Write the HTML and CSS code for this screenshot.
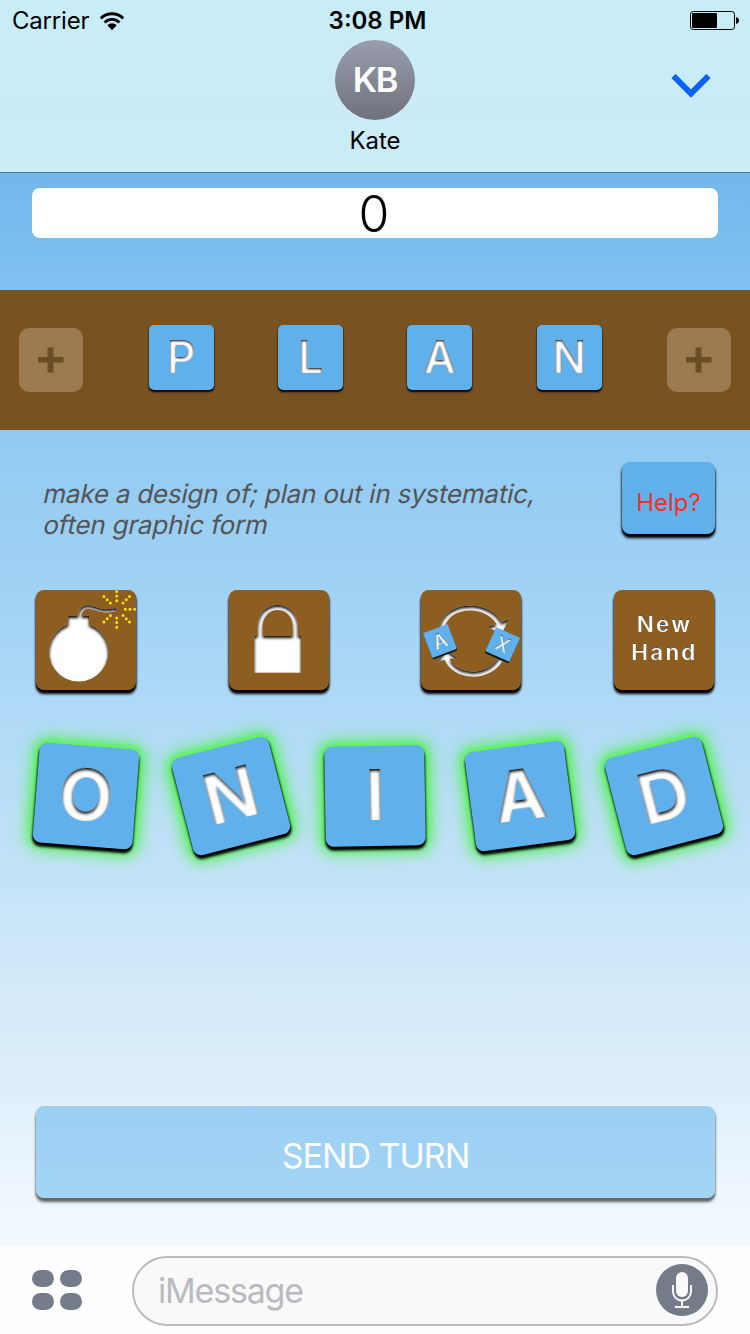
FILE: index.html
```html
<!DOCTYPE html>
<html lang="en">
<head>
<meta charset="utf-8">
<title>Kate</title>
<link rel="stylesheet" href="styles.css">
</head>
<body>
<svg class="defs" width="0" height="0" aria-hidden="true">
  <defs>
    <filter id="carve" x="-10%" y="-10%" width="120%" height="120%" color-interpolation-filters="sRGB">
      <feComponentTransfer in="SourceAlpha"><feFuncA type="table" tableValues="1 0"/></feComponentTransfer>
      <feGaussianBlur stdDeviation="1.5"/>
      <feOffset dy="2" result="edge"/>
      <feComposite in="edge" in2="SourceAlpha" operator="in" result="inner"/>
      <feMerge><feMergeNode in="SourceGraphic"/><feMergeNode in="inner"/></feMerge>
    </filter>
    <filter id="carve-small" x="-10%" y="-10%" width="120%" height="120%" color-interpolation-filters="sRGB">
      <feComponentTransfer in="SourceAlpha"><feFuncA type="table" tableValues="1 0"/></feComponentTransfer>
      <feGaussianBlur stdDeviation="0.9"/>
      <feOffset dy="1.1" result="edge"/>
      <feComposite in="edge" in2="SourceAlpha" operator="in" result="inner"/>
      <feMerge><feMergeNode in="SourceGraphic"/><feMergeNode in="inner"/></feMerge>
    </filter>
    <filter id="carve-tiny" x="-10%" y="-10%" width="120%" height="120%" color-interpolation-filters="sRGB">
      <feComponentTransfer in="SourceAlpha"><feFuncA type="table" tableValues="0.7 0"/></feComponentTransfer>
      <feGaussianBlur stdDeviation="0.7"/>
      <feOffset dy="0.8" result="edge"/>
      <feComposite in="edge" in2="SourceAlpha" operator="in" result="inner"/>
      <feMerge><feMergeNode in="SourceGraphic"/><feMergeNode in="inner"/></feMerge>
    </filter>
  </defs>
</svg>
<div class="screen">
  <header class="header">
    <div class="status">
      <div class="status-left">
        <span class="carrier">Carrier</span>
        <svg class="wifi" width="26" height="19" viewBox="0 0 26 19">
          <path d="M1.8 6.3A16.2 16.2 0 0 1 24.2 6.3" fill="none" stroke="#000" stroke-width="3.1"/>
          <path d="M5.6 10.4A10.6 10.6 0 0 1 20.4 10.4" fill="none" stroke="#000" stroke-width="2.8"/>
          <path d="M8.3 13.2A6.6 6.6 0 0 1 17.7 13.2L13 18.2Z"/>
        </svg>
      </div>
      <span class="time">3:08 PM</span>
      <svg class="battery" width="50" height="20" viewBox="0 0 50 20">
        <rect x=".5" y=".5" width="44" height="18" rx="2.8" fill="none" stroke="#000"/>
        <rect x="2" y="2" width="25" height="15" rx="1"/>
        <path d="M46 6.2Q49 6.5 49 9.5Q49 12.5 46 12.8Z"/>
      </svg>
    </div>
    <div class="contact">
      <span></span>
      <div class="person">
        <div class="avatar">KB</div>
        <span class="name">Kate</span>
      </div>
      <svg class="chevron" width="40" height="26" viewBox="0 0 40 26">
        <path d="M2.500 2L20 19.500L37.500 2" fill="none" stroke="#0b60fe" stroke-width="6"/>
      </svg>
    </div>
  </header>

  <main class="game">
    <div class="score">0</div>
    <div class="board">
      <div class="slot"><svg width="26" height="26" viewBox="0 0 26 26"><path d="M9.500 .5h6v9.500h10v5.500H15.500v10h-6V15.500H0V10H9.500z"/></svg></div>
      <div class="word">
        <div class="tile small"><span>P</span></div>
        <div class="tile small"><span>L</span></div>
        <div class="tile small"><span>A</span></div>
        <div class="tile small"><span>N</span></div>
      </div>
      <div class="slot"><svg width="26" height="26" viewBox="0 0 26 26"><path d="M9.500 .5h6v9.500h10v5.500H15.500v10h-6V15.500H0V10H9.500z"/></svg></div>
    </div>
    <div class="clue">
      <p class="definition"><span class="line first">make a design of; plan out in systematic,</span> <span class="line second">often graphic form</span></p>
      <div class="help">Help?</div>
    </div>
    <div class="tools">
      <div class="tool">
        <svg width="101" height="100" viewBox="0 0 101 100">
          <g filter="url(#carve)">
            <path fill="#fff" d="M32.300 26H53V34.500A29.500 29.500 0 1 1 32.300 34.500Z"/>
            <path d="M43.500 28C44 21 47 17 52 16.800C59 16.500 64 24 80.500 19.500" fill="none" stroke="#fff" stroke-width="3.200"/>
          </g>
          <g class="spark">
            <path d="M80.700 10.700V0M80.700 28V38M89.400 19.300H99.500M87 13L94 6M87 25.600L94 32.600M74.400 13L67.400 6M74.400 25.600L67.400 32.600"/>
          </g>
        </svg>
      </div>
      <div class="tool">
        <svg width="100" height="100" viewBox="0 0 100 100">
          <g filter="url(#carve)">
            <path fill="#fff" d="M25.300 46H72V82.700H25.300Z"/>
            <path d="M31.200 48V37C31.200 11 66.200 11 66.200 37V48" fill="none" stroke="#fff" stroke-width="5"/>
          </g>
        </svg>
      </div>
      <div class="tool">
        <svg width="101" height="100" viewBox="0 0 101 100">
          <g filter="url(#carve)">
            <path d="M21.500 37C26 12 70 12 79 36" fill="none" stroke="#fff" stroke-width="5"/>
            <path d="M25.500 68C33 89 69 90 80.500 68" fill="none" stroke="#fff" stroke-width="5"/>
            <path fill="#fff" d="M66 37Q75 35 87.500 29.500L81 44ZM15.500 73L25 60L37 69Q26 67 15.500 73Z"/>
          </g>
          <g transform="translate(19 51) rotate(-21)">
            <rect class="mini-shade" x="-13.200" y="-11" width="26.400" height="26" rx="2"/>
            <rect class="mini" x="-13.200" y="-13.200" width="26.400" height="26.400" rx="1.500"/>
            <text class="mini-letter" x="0" y="7.200">A</text>
          </g>
          <g transform="translate(81.700 54.500) rotate(24)">
            <rect class="mini-shade" x="-13.200" y="-11" width="26.400" height="26" rx="2"/>
            <rect class="mini" x="-13.200" y="-13.200" width="26.400" height="26.400" rx="1.500"/>
            <text class="mini-letter" x="0" y="7.200">X</text>
          </g>
        </svg>
      </div>
      <div class="tool"><span class="new-hand">New<br>Hand</span></div>
    </div>
    <div class="hand">
      <div class="tile tilt-o"><span>O</span></div>
      <div class="tile tilt-n"><span>N</span></div>
      <div class="tile tilt-i"><span>I</span></div>
      <div class="tile tilt-a"><span>A</span></div>
      <div class="tile tilt-d"><span>D</span></div>
    </div>
    <div class="send">SEND TURN</div>
  </main>

  <footer class="composer">
    <div class="apps"><i></i><i></i><i></i><i></i></div>
    <div class="message">
      <span class="placeholder">iMessage</span>
      <svg class="mic" width="52" height="52" viewBox="0 0 52 52">
        <circle cx="26" cy="26" r="26" fill="#747b89"/>
        <rect x="20" y="8" width="12" height="25" rx="6" fill="#f9f9f9"/>
        <path d="M17 21V27.500A9 9 0 0 0 35 27.500V21M26 36.500V43M19 43H33" fill="none" stroke="#f9f9f9" stroke-width="2"/>
      </svg>
    </div>
  </footer>
</div>
</body>
</html>
```
FILE: styles.css
```css
* { box-sizing: border-box; }

body {
  margin: 0;
  font-family: Inter, "Liberation Sans", sans-serif;
  color: #000;
}

.defs { display: block; width: 0; height: 0; }

.screen {
  width: 750px;
  height: 1334px;
  display: flex;
  flex-direction: column;
  overflow: hidden;
}

.header {
  height: 173px;
  border-bottom: 1px solid #44799b;
  background: linear-gradient(#c8edf6, #cbebf6 80%, #cbeef6);
}

.status {
  height: 40px;
  padding: 1px 10px 0 12px;
  display: grid;
  grid-template-columns: 1fr auto 1fr;
  align-items: center;
  font-size: 24px;
}

.status-left { display: flex; align-items: center; gap: 10px; }
.carrier { letter-spacing: -0.2px; line-height: 40px; }
.time { padding-left: 3px; font-weight: 600; line-height: 40px; }
.battery { justify-self: end; }

.contact {
  height: 120px;
  padding: 0 39px;
  display: grid;
  grid-template-columns: 1fr 80px 1fr;
}

.person { display: flex; flex-direction: column; align-items: center; }

.avatar {
  width: 80px;
  height: 80px;
  border-radius: 50%;
  background: linear-gradient(#999eae, #6f727c);
  color: #fff;
  font-size: 34.500px;
  font-weight: 600;
  letter-spacing: -1.2px;
  line-height: 80px;
  text-align: center;
}

.name { font-size: 24px; line-height: 42px; }
.chevron { justify-self: end; margin-top: 34px; }

.game {
  height: 1073px;
  background: linear-gradient(#71b8ee, #90caf3 24%, #9fd1f4 37%, #b3dbf7 53%, #c5e3f8 66%, #deeffa 85%, #eef6fe 95%, #f2fafd);
}

.score {
  margin: 15px 32px 52px;
  height: 50px;
  padding-right: 2px;
  border-radius: 8px;
  background: #fff;
  font-size: 50px;
  font-weight: 300;
  line-height: 53px;
  text-align: center;
}

.board {
  height: 140px;
  padding: 0 19px;
  display: flex;
  align-items: center;
  justify-content: space-between;
  background: #785221;
}

.slot {
  width: 64px;
  height: 64px;
  border-radius: 10px;
  background: #9a7a4e;
  display: grid;
  place-items: center;
  fill: #6b4c24;
}

.slot svg { margin-bottom: 1px; }

.word {
  display: flex;
  gap: 64.300px;
  margin: 0 0 5px .6px;
}

.tile {
  width: 100px;
  height: 100px;
  border-radius: 8px;
  background: #60b0ec;
  box-shadow: 0 4px 3px #000, 0 2px 2px #000, 0 1px 16px 6px #57f257, 0 0 6px 2px #57f257;
  display: flex;
  justify-content: center;
  color: #fff;
  font-size: 70px;
  font-weight: 650;
  line-height: 97px;
}

.tile span { display: block; padding: 0 8px; filter: url(#carve); }

.tile.small {
  width: 65px;
  height: 65px;
  border-radius: 5px;
  box-shadow: 0 2px 2px #000, 0 1px 1px #000;
  font-size: 45px;
  font-weight: 600;
  line-height: 64px;
}

.tile.small span { filter: url(#carve-small); }

.clue {
  height: 160px;
  padding: 32px 35px 0 44px;
  display: flex;
  justify-content: space-between;
  align-items: flex-start;
}

.definition {
  margin: 16px 0 0;
  color: #555;
  font-size: 26px;
  line-height: 31px;
  white-space: nowrap;
}

.line { display: block; transform: skewX(-12deg); }
.first { letter-spacing: -0.22px; }
.second { letter-spacing: -0.2px; }

.help {
  width: 93px;
  height: 72px;
  padding-top: 5px;
  border-radius: 8px;
  background: #60b0ec;
  box-shadow: 0 4px 3px #000, 0 2px 2px #000;
  color: #f5311f;
  font-size: 24px;
  line-height: 72px;
  text-align: center;
}

.tools {
  height: 156px;
  padding: 0 36px;
  display: flex;
  justify-content: space-between;
}

.tool {
  width: 100px;
  height: 100px;
  border-radius: 8px;
  background: #8e5e20;
  box-shadow: 0 4px 3px #000, 0 2px 2px #000;
}

.tool svg { display: block; }

.spark path {
  fill: none;
  stroke: #fae013;
  stroke-width: 3;
  stroke-linecap: round;
  stroke-dasharray: 0 4.600;
}

.mini { fill: #60b0ec; }
.mini-shade { fill: #1b1712; }
.mini-letter {
  fill: #fff;
  font-size: 20px;
  font-weight: 500;
  text-anchor: middle;
  filter: url(#carve-tiny);
}

.new-hand {
  display: block;
  padding: 20px 0 0 1px;
  color: #fff;
  font-size: 22.500px;
  font-weight: 600;
  letter-spacing: 2.200px;
  line-height: 28px;
  text-align: center;
  filter: url(#carve-tiny);
}

.hand {
  height: 360px;
  padding: 0 36px;
  display: flex;
  justify-content: space-between;
}

.tilt-o { transform: rotate(4.500deg); }
.tilt-n { transform: rotate(-14.500deg); }
.tilt-i { transform: rotate(-1deg); }
.tilt-a { transform: rotate(-7.500deg); }
.tilt-d { transform: rotate(-14.500deg); }

.send {
  margin: 0 35px 0 36px;
  height: 92px;
  padding-top: 4px;
  border-radius: 8px;
  background: linear-gradient(#9cd0f3, #a2d4f5);
  box-shadow: 0 4px 3px #666, 0 2px 2px #777;
  color: #fff;
  font-size: 34px;
  letter-spacing: -1px;
  line-height: 92px;
  text-align: center;
}

.composer {
  height: 88px;
  padding: 10px 32px;
  display: flex;
  align-items: flex-start;
  gap: 50px;
  background: #fefefe;
}

.apps {
  padding-top: 14px;
  display: grid;
  grid-template-columns: 22px 22px;
  gap: 6px;
}

.apps i { height: 17px; border-radius: 9px; background: #747b89; }

.message {
  flex: 1;
  height: 70px;
  padding: 0 8px 0 24px;
  border: 2px solid #bbbac1;
  border-radius: 35px;
  background: #f9f9f9;
  display: flex;
  align-items: center;
  justify-content: space-between;
}

.placeholder { color: #bbbac1; font-size: 34px; letter-spacing: -1.200px; line-height: 66px; }
.mic { margin-bottom: 2px; }
```
